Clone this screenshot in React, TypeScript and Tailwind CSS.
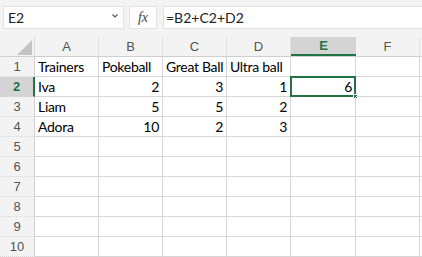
import React from "react";

const cols = ["A", "B", "C", "D", "E", "F"];

// cell values per row; numbers are right aligned
const data: (string | number | null)[][] = [
  ["Trainers", "Pokeball", "Great Ball", "Ultra ball", null, null],
  ["Iva", 2, 3, 1, 6, null],
  ["Liam", 5, 5, 2, null, null],
  ["Adora", 10, 2, 3, null, null],
];

const App = () => {
  const rows = Array.from({ length: 10 }, (_, i) => i + 1);

  return (
    <div className="w-[422px] h-[257px] overflow-hidden bg-white font-['Liberation_Sans',sans-serif]">
      {/* formula bar */}
      <div className="h-[37px] bg-[#f3f3f3] flex items-start pt-[6px]">
        <div className="ml-[3px] w-[121px] h-[23px] bg-white border border-[#e3e3e3] flex items-center justify-between pl-[4px] pr-[4px]">
          <span className="text-[14px] text-[#222] font-['Lato',sans-serif]">E2</span>
          <svg width="8" height="6" viewBox="0 0 8 6" className="mb-[4px]">
            <path d="M1.5 1.5 L4 4 L6.5 1.5" fill="none" stroke="#555" strokeWidth="1.1" />
          </svg>
        </div>
        <div className="ml-[5px] w-[28px] h-[23px] bg-white border border-[#e3e3e3] flex items-center justify-center">
          <span className="italic text-[14px] text-[#444] font-['Liberation_Serif',serif]">fx</span>
        </div>
        <div className="ml-[6px] flex-1 h-[23px] bg-white border-y border-l border-[#e3e3e3] flex items-center pl-[2px]">
          <span className="text-[14px] text-[#222] font-['Lato',sans-serif]">=B2+C2+D2</span>
        </div>
      </div>

      {/* column headers */}
      <div className="flex h-[20px] bg-[#f3f3f3] border-b border-[#cfcfcf]">
        <div className="w-[35px] shrink-0 border-r border-[#dcdcdc] flex items-end justify-end pr-[2px] pb-[1px]">
          <svg width="15" height="15" viewBox="0 0 15 15">
            <path d="M15 0 L15 15 L0 15 Z" fill="#c4c4c4" />
          </svg>
        </div>
        {cols.map((c) =>
          c === "E" ? (
            <div
              key={c}
              className="w-[65px] shrink-0 bg-[#d4d4d4] border-b-2 border-[#217346] flex items-center justify-center text-[13px] font-bold text-[#217346]"
            >
              {c}
            </div>
          ) : (
            <div
              key={c}
              className="w-[64px] shrink-0 border-r border-[#e2e2e2] flex items-center justify-center text-[13px] text-[#555]"
            >
              {c}
            </div>
          )
        )}
        <div className="flex-1" />
      </div>

      {/* grid */}
      {rows.map((r) => {
        const vals = data[r - 1] ?? [];
        const active = r === 2;
        return (
          <div key={r} className="flex h-[20px]">
            <div
              className={
                active
                  ? "w-[35px] shrink-0 bg-[#d4d4d4] border-r-2 border-r-[#217346] border-b border-b-[#d9d9d9] [border-bottom-style:dotted] flex items-center justify-center text-[13px] font-bold text-[#217346]"
                  : "w-[35px] shrink-0 bg-[#f3f3f3] border-r border-r-[#cfcfcf] border-b border-b-[#d9d9d9] [border-bottom-style:dotted] flex items-center justify-center text-[13px] text-[#555]"
              }
            >
              {r}
            </div>
            {cols.map((c, i) => {
              const v = vals[i];
              const isNum = typeof v === "number";
              const selected = r === 2 && c === "E";
              return (
                <div
                  key={c}
                  className={`${c === "E" ? "w-[65px]" : "w-[64px]"} shrink-0 relative border-r border-b border-[#d6d6d6] flex items-center px-[3px] text-[14px] tracking-[-0.3px] text-black font-['Lato',sans-serif] ${
                    isNum ? "justify-end" : "justify-start"
                  } whitespace-nowrap`}
                >
                  {v}
                  {selected && (
                    <div className="absolute left-[-1px] top-[-1px] w-[66px] h-[21px] border-2 border-[#217346]">
                      <div className="absolute right-[-4px] bottom-[-4px] w-[5px] h-[5px] bg-[#217346] border border-white" />
                    </div>
                  )}
                </div>
              );
            })}
            <div className="flex-1 border-b border-[#d6d6d6]" />
          </div>
        );
      })}
    </div>
  );
};

export default App;
